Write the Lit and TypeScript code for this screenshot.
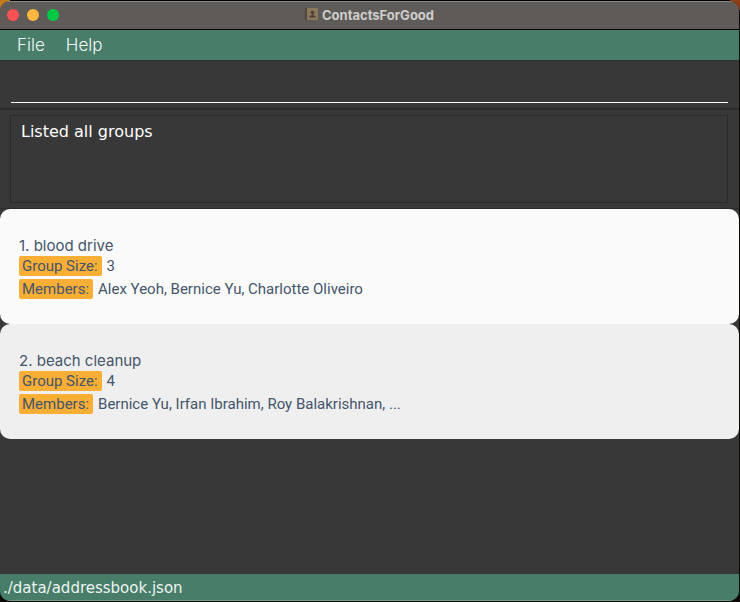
import { LitElement, html, css } from "lit";
import { customElement, property, state } from "lit/decorators.js";

interface Group {
  name: string;
  size: number;
  members: string;
}

@customElement("group-card")
class GroupCard extends LitElement {
  @property({ type: Number }) index = 1;
  @property({ attribute: false }) group!: Group;

  static styles = css`
    :host {
      display: block;
      color: #45556b;
      font-size: 15px;
      line-height: 20px;
    }
    .name {
      margin: 0;
      padding-top: 1px;
      font-family: Inter, "Liberation Sans", sans-serif;
      font-size: 15px;
      font-weight: 400;
    }
    .fields {
      display: flex;
      flex-direction: column;
      gap: 3px;
      margin: 0;
      font-family: Roboto, "Liberation Sans", sans-serif;
    }
    .field {
      display: flex;
      gap: 5px;
    }
    .label {
      padding: 0 4px 0 3px;
      border-radius: 2px;
      background: #f9ae35;
      white-space: nowrap;
    }
    .value {
      margin: 0;
    }
  `;

  render() {
    return html`
      <h2 class="name">${this.index}. ${this.group.name}</h2>
      <dl class="fields">
        <div class="field">
          <dt class="label">Group Size:</dt>
          <dd class="value">${this.group.size}</dd>
        </div>
        <div class="field">
          <dt class="label">Members:</dt>
          <dd class="value">${this.group.members}</dd>
        </div>
      </dl>
    `;
  }
}

@customElement("app-root")
class AppRoot extends LitElement {
  @state() private groups: Group[] = [
    { name: "blood drive", size: 3, members: "Alex Yeoh, Bernice Yu, Charlotte Oliveiro" },
    { name: "beach cleanup", size: 4, members: "Bernice Yu, Irfan Ibrahim, Roy Balakrishnan, ..." },
  ];

  static styles = css`
    * {
      box-sizing: border-box;
    }
    :host {
      display: flex;
      box-sizing: border-box;
      min-height: 100vh;
      padding: 1px 1px 1px 0;
      background: linear-gradient(90deg, #c47a1c 0 10px, #000 10px calc(100% - 10px), #8a3f14 calc(100% - 10px)) top / 100% 10px no-repeat #0b0807;
    }
    .window {
      display: flex;
      flex: 1;
      flex-direction: column;
      overflow: hidden;
      border-radius: 10px;
      background: #383838;
    }
    .titlebar {
      display: grid;
      grid-template-columns: 1fr auto 1fr;
      align-items: center;
      height: 29px;
      padding: 0 7px 1px;
      border-top: 1px solid #8a8785;
      border-bottom: 1px solid #000;
      background: #5e5b58;
    }
    .lights {
      display: flex;
      gap: 8px;
    }
    .light {
      width: 12px;
      height: 12px;
      padding: 0;
      border: 0;
      border-radius: 50%;
    }
    .close {
      background: #ff5152;
    }
    .minimise {
      background: #ffb83f;
    }
    .zoom {
      background: #00ca45;
    }
    .title {
      display: flex;
      align-items: center;
      gap: 4px;
      margin: 0;
      padding-bottom: 1px;
      color: #cfcdcb;
      font: 700 13px/16px Inter, "Liberation Sans", sans-serif;
    }
    .menus {
      display: flex;
      gap: 21px;
      height: 31px;
      padding: 0 17px;
      border-bottom: 1px solid #2b2f2d;
      background: #477d69;
    }
    .menu {
      padding: 0;
      border: 0;
      background: none;
      color: #f2f7f5;
      font: 300 17px/30px Inter, "Liberation Sans", sans-serif;
    }
    .command {
      padding: 5px 11px;
      border-bottom: 2px solid #2b2b2b;
    }
    .entry {
      display: block;
      width: 100%;
      height: 37px;
      padding: 0;
      border: 0;
      border-bottom: 1px solid #fff;
      outline: 0;
      background: none;
      color: #fff;
      font: 300 17px/24px Inter, "Liberation Sans", sans-serif;
    }
    .feedback {
      display: flex;
      padding: 5px 11px 5px 10px;
      border-bottom: 1px solid #2b2b2b;
    }
    .result {
      flex: 1;
      height: 88px;
      padding: 6px 10px;
      border: 1px solid #2a2a2a;
      outline: 0;
      resize: none;
      background: none;
      color: #fff;
      font: 400 16px/20px "DejaVu Sans", sans-serif;
    }
    .groups {
      flex: 1;
      margin: 0;
      padding: 0;
      list-style: none;
    }
    .card {
      height: 115px;
      padding: 26px 19px;
      border-radius: 10px;
      background: #fafafa;
    }
    .card:nth-child(even) {
      background: #efefef;
    }
    .status {
      height: 27px;
      padding: 1px 3px 0;
      border-bottom: 1px solid #6d9a89;
      background: #477d69;
      color: #eef4f1;
      font: 400 15px/26px "DejaVu Sans", sans-serif;
    }
  `;

  render() {
    return html`
      <div class="window">
        <header class="titlebar">
          <div class="lights">
            <button class="light close" aria-label="Close"></button>
            <button class="light minimise" aria-label="Minimise"></button>
            <button class="light zoom" aria-label="Zoom"></button>
          </div>
          <h1 class="title">
            <svg width="13" height="13" viewBox="0 0 13 13" aria-hidden="true">
              <rect width="13" height="12" rx="1" fill="#8c7758" />
              <rect width="2" height="12" fill="#4f4943" />
              <circle cx="7.5" cy="4.5" r="1.8" fill="#4b4036" />
              <path d="M6.8 5h1.4v2.2l2.3.8v1.5h-6V8l2.3-.8z" fill="#4b4036" />
            </svg>
            ContactsForGood
          </h1>
        </header>
        <nav class="menus">
          <button class="menu">File</button>
          <button class="menu">Help</button>
        </nav>
        <div class="command">
          <input class="entry" type="text" aria-label="Command" />
        </div>
        <div class="feedback">
          <textarea class="result" readonly aria-label="Result" .value=${"Listed all groups"}></textarea>
        </div>
        <ol class="groups">
          ${this.groups.map(
            (group, i) => html`
              <li class="card"><group-card .index=${i + 1} .group=${group}></group-card></li>
            `,
          )}
        </ol>
        <footer class="status">./data/addressbook.json</footer>
      </div>
    `;
  }
}
